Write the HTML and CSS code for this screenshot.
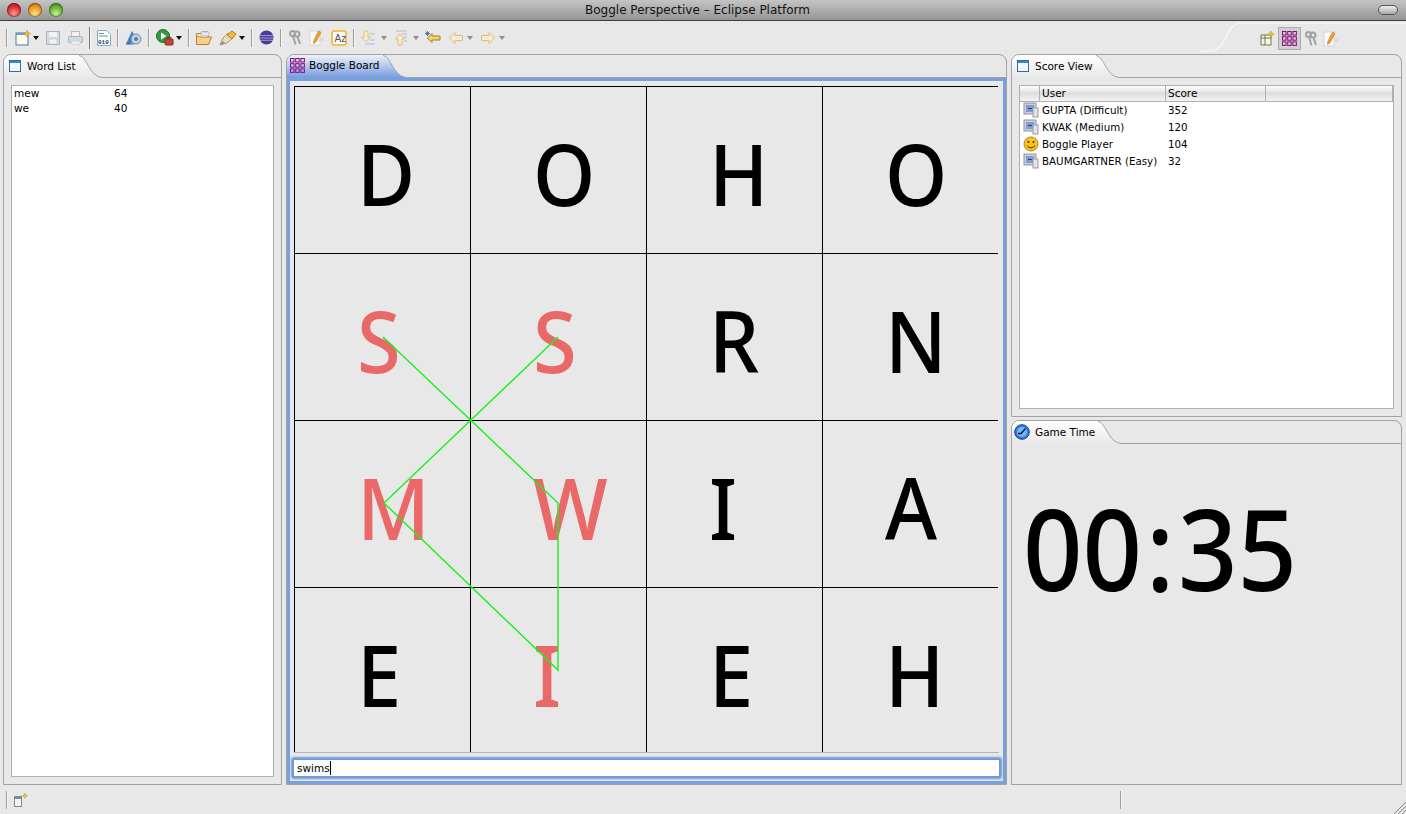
FILE: index.html
```html
<!DOCTYPE html>
<html lang="en">
<head>
    <meta charset="UTF-8">
    <title>Boggle Perspective - Eclipse Platform</title>
    <link rel="stylesheet" href="styles.css">
</head>
<body>
    <svg class="defs" width="0" height="0">
        <defs>
            <linearGradient id="tabfill" x1="0" y1="0" x2="0" y2="1"><stop offset="0" stop-color="#fff"/><stop offset="1" stop-color="#e8e8e8"/></linearGradient>
            <linearGradient id="tabblue" x1="0" y1="0" x2="0" y2="1"><stop offset="0" stop-color="#eef2fa"/><stop offset=".85" stop-color="#7a9fdf"/></linearGradient>
            <symbol id="i-view" viewBox="0 0 12 12"><rect x=".5" y=".5" width="11" height="11" fill="#f4f8fd" stroke="#2f6bb0"/><rect x="1" y="1" width="10" height="2" fill="#3f83c8"/></symbol>
            <symbol id="i-grid" viewBox="0 0 15 15"><g fill="none" stroke="#8c0a7e" stroke-width="1"><rect x=".5" y=".5" width="3.5" height="3.5"/><rect x="5.700" y=".5" width="3.500" height="3.500"/><rect x="10.900" y=".5" width="3.500" height="3.500"/><rect x=".5" y="5.700" width="3.500" height="3.500"/><rect x="5.700" y="5.700" width="3.500" height="3.500"/><rect x="10.900" y="5.700" width="3.500" height="3.500"/><rect x=".5" y="10.900" width="3.500" height="3.500"/><rect x="5.700" y="10.900" width="3.500" height="3.500"/><rect x="10.900" y="10.900" width="3.500" height="3.500"/></g></symbol>
            <symbol id="i-keys" viewBox="0 0 14 16"><g fill="none" stroke="#a2a2a2" stroke-width="2"><circle cx="4.500" cy="3.500" r="2.500"/><circle cx="9" cy="4" r="2.500"/><path d="M5 6l2.500 8.500M9.500 6.500l2.500 7.500"/></g></symbol>
            <symbol id="i-pencil" viewBox="0 0 16 16"><rect x="1" y="1" width="10" height="14" fill="#fbfbfb" stroke="#d5d5d5"/><path d="M9.500 1l2.500 1.500-5 9.500-2.500 1.500.3-3z" fill="#f0a030" stroke="#c9781a" stroke-width=".6"/><path d="M12 8h3v3h-3z" fill="#d8d8d8"/></symbol>
            <symbol id="i-pc" viewBox="0 0 16 16"><rect x="1" y="1" width="12" height="11" fill="#c8d0dc" stroke="#8d96a5"/><rect x="3" y="3" width="8" height="7" fill="#7f9ccc"/><path d="M5 6.500h4" stroke="#1e3f8a"/><rect x="10" y="6" width="5" height="9" fill="#e4e4e4" stroke="#9a9a9a"/></symbol>
            <symbol id="i-left" viewBox="0 0 16 14"><path d="M7 1.500L1.500 7 7 12.500V9.500h7.500v-5H7z" fill="#f6edd0" stroke="#d9bf7c"/></symbol>
        </defs>
    </svg>

    <header class="titlebar">
        <div class="lights">
            <span class="light light-red"></span>
            <span class="light light-amber"></span>
            <span class="light light-green"></span>
        </div>
        <div class="window-title">Boggle Perspective – Eclipse Platform</div>
        <span class="pill"></span>
    </header>

    <div class="toolbar">
        <span class="sep sep-first"></span>
        <svg class="tool" width="16" height="16" viewBox="0 0 16 16"><rect x="1" y="3" width="12" height="12" fill="#fffbe8" stroke="#4a78b0"/><rect x="1" y="3" width="12" height="2" fill="#6a9ad0"/><path d="M12 0l1 2.500 2.500 1-2.500 1-1 2.500-1-2.500-2.500-1 2.500-1z" fill="#f2c230" stroke="#b98a10" stroke-width=".5"/></svg>
        <span class="caret"></span>
        <svg class="tool gap-6" width="16" height="16" viewBox="0 0 16 16"><path d="M1.500 1.500h13v13h-13z" fill="#d4dbe4" stroke="#a9b2be"/><rect x="4" y="2" width="8" height="5" fill="#eef1f5"/><rect x="4" y="9" width="8" height="5" fill="#f1f3f6" stroke="#b2b9c2" stroke-width=".5"/></svg>
        <svg class="tool gap-6" width="16" height="16" viewBox="0 0 16 16"><rect x="4.500" y="1.500" width="8" height="5" fill="#f1f1f1" stroke="#b9bec6"/><rect x="1.500" y="6.500" width="14" height="6" rx="1" fill="#d0d9e6" stroke="#a8b2c0"/><rect x="4" y="11" width="9" height="3.500" fill="#eee" stroke="#b9bec6" stroke-width=".5"/></svg>
        <span class="sep sep-tall"></span>
        <svg class="tool" width="14" height="16" viewBox="0 0 14 16"><path d="M.5.500h9l4 4v11H.5z" fill="#fdfdfd" stroke="#8da6c6"/><rect x="2" y="3" width="5" height="1" fill="#6e8cb5"/><rect x="2" y="5.500" width="9" height="1" fill="#6e8cb5"/><text class="bin" x="1" y="13.500">010</text></svg>
        <span class="sep"></span>
        <svg class="tool" width="17" height="16" viewBox="0 0 17 16"><path d="M1 14L7 1l3 5-4 8z" fill="#3f7fc4"/><circle cx="11" cy="9" r="5" fill="#c3d3e4" stroke="#6f8aa8"/><circle cx="11" cy="9" r="2" fill="#5a7b9e"/><path d="M1 14h8" stroke="#2a66a8"/></svg>
        <span class="sep"></span>
        <svg class="tool" width="18" height="17" viewBox="0 0 18 17"><circle cx="7" cy="7" r="6.500" fill="#2f9c3e" stroke="#1e6e2a"/><path d="M5 3.500l5.500 3.500L5 10.500z" fill="#fff"/><rect x="9" y="10" width="8" height="6" rx="1" fill="#c8443a" stroke="#8a2820"/><path d="M11 10V8.500h4V10" fill="none" stroke="#8a2820"/></svg>
        <span class="caret"></span>
        <span class="sep"></span>
        <svg class="tool" width="16" height="14" viewBox="0 0 16 14"><path d="M.5 5V13.500h12L15.500 6H4z" fill="#f8d088" stroke="#b9802c"/><path d="M.5 5V2.500H5L6 1h6v5" fill="#fbe6b8" stroke="#b9802c"/><rect x="5" y="1" width="8" height="4" fill="#e2e6ee" stroke="#9aa5b5" stroke-width=".5"/></svg>
        <svg class="tool gap-7" width="18" height="16" viewBox="0 0 18 16"><path d="M1 15l3-7 5-5 5 5-6 5z" fill="#e6dcc0" stroke="#aa9a70"/><path d="M8 5l5-4 4 3-4 5z" fill="#f4b842" stroke="#b37f1c"/><path d="M1 15l3-4 2 2z" fill="#8a8a8a"/></svg>
        <span class="caret"></span>
        <span class="sep"></span>
        <svg class="tool" width="15" height="15" viewBox="0 0 15 15"><circle cx="7.500" cy="7.500" r="7" fill="#4a3a9a"/><path d="M1 5.500h13M.5 8h14M1 10.300h13" stroke="#c9c2ee" stroke-width=".7"/></svg>
        <span class="sep"></span>
        <svg class="tool" width="14" height="16"><use href="#i-keys"/></svg>
        <svg class="tool gap-7" width="16" height="16"><use href="#i-pencil"/></svg>
        <svg class="tool gap-6" width="16" height="16" viewBox="0 0 16 16"><rect x="1" y="1" width="14" height="14" rx="2" fill="#fbfbfb" stroke="#f0b428" stroke-width="1.600"/><text class="az" x="3.500" y="12">Az</text></svg>
        <span class="sep"></span>
        <svg class="tool" width="15" height="16" viewBox="0 0 15 16"><path d="M3 1h4v6h2.500L5 12 .5 7H3z" fill="#f6edd0" stroke="#d9bf7c"/><path d="M9 4h5M9 10h5M4 14h10" stroke="#a8bcd8"/></svg>
        <span class="caret caret-grey gap-5"></span>
        <svg class="tool gap-6" width="15" height="16" viewBox="0 0 15 16"><path d="M5 15h4V9h2.500L7 4 2.500 9H5z" fill="#f6edd0" stroke="#d9bf7c"/><path d="M3 1h11M9 4h5M11 7h3M11 11h3" stroke="#a8bcd8"/></svg>
        <span class="caret caret-grey gap-5"></span>
        <svg class="tool gap-6" width="16" height="14" viewBox="0 0 16 14"><path d="M7 2.500L2.500 7 7 11.500V9h8V5H7z" fill="#f6d36a" stroke="#a8801c"/><path d="M2.500 0v5M0 2.500h5M.8.800l3.400 3.400M4.200.800L.8 4.200" stroke="#2d4d9a" stroke-width=".7"/></svg>
        <svg class="tool gap-7" width="16" height="14"><use href="#i-left"/></svg>
        <span class="caret caret-grey gap-3"></span>
        <svg class="tool flip gap-7" width="16" height="14"><use href="#i-left"/></svg>
        <span class="caret caret-grey gap-3"></span>

        <svg class="swoosh" width="206" height="32" viewBox="0 0 206 32"><path d="M0 30h10C28 30 24 2 42 2h164" fill="none" stroke="#fafafa" stroke-width="1.200"/></svg>
        <div class="persp">
            <svg width="15" height="15" viewBox="0 0 15 15"><path d="M1 4h10v10H1zM1 7h10M5 4v10" fill="#f6f4e4" stroke="#6a7a52"/><path d="M11 0l1 2.200 2.200 1-2.200 1-1 2.200-1-2.200-2.200-1 2.200-1z" fill="#f2c230" stroke="#b98a10" stroke-width=".5"/></svg>
            <span class="persp-on"><svg width="15" height="15"><use href="#i-grid"/></svg></span>
            <svg width="14" height="16"><use href="#i-keys"/></svg>
            <svg class="persp-last" width="16" height="16"><use href="#i-pencil"/></svg>
        </div>
    </div>

    <main class="workspace">
        <section class="panel panel-words">
            <div class="tab-head">
                <div class="tab"><svg width="12" height="12"><use href="#i-view"/></svg><span class="tab-label">Word List</span></div>
                <svg class="tab-curve" width="26" height="23" viewBox="0 0 26 23"><path d="M0 0h3C11 1 13 21 26 22v1H0z" fill="url(#tabfill)"/><path d="M3 .5C11 1 13 21.500 26 22.500" fill="none" stroke="#a2a2a2"/></svg>
                <div class="tab-rest"></div>
            </div>
            <div class="list-box">
                <div class="word-row"><span class="word">mew</span><span>64</span></div>
                <div class="word-row"><span class="word">we</span><span>40</span></div>
            </div>
        </section>

        <section class="panel panel-board">
            <div class="tab-head tab-head-board">
                <div class="tab tab-active"><svg width="15" height="15"><use href="#i-grid"/></svg><span class="tab-label">Boggle Board</span></div>
                <svg class="tab-curve" width="26" height="26" viewBox="0 0 26 26"><path d="M0 0h3C11 1 13 21 26 22v4H0z" fill="url(#tabblue)"/><path d="M3 .5C11 1 13 21.500 26 22.500" fill="none" stroke="#a2a2a2"/></svg>
                <div class="tab-rest-active"></div>
            </div>
            <div class="board-frame">
                <div class="board">
                    <div class="cell"><span class="letter">D</span></div><div class="cell"><span class="letter">O</span></div><div class="cell"><span class="letter">H</span></div><div class="cell"><span class="letter">O</span></div>
                    <div class="cell hit"><span class="letter">S</span></div><div class="cell hit"><span class="letter">S</span></div><div class="cell"><span class="letter">R</span></div><div class="cell"><span class="letter">N</span></div>
                    <div class="cell hit"><span class="letter">M</span></div><div class="cell hit"><span class="letter">W</span></div><div class="cell"><span class="letter">I</span></div><div class="cell"><span class="letter">A</span></div>
                    <div class="cell"><span class="letter">E</span></div><div class="cell hit"><span class="letter">I</span></div><div class="cell"><span class="letter">E</span></div><div class="cell"><span class="letter">H</span></div>
                    <svg class="trace" width="704" height="666" viewBox="0 0 704 666"><polyline points="89,251 264,417 264,584 90,417 264,251" fill="none" stroke="#1cf01c" stroke-width="1.400"/></svg>
                </div>
                <div class="word-input">swims<span class="cursor"></span></div>
            </div>
        </section>

        <div class="side">
            <section class="panel panel-score">
                <div class="tab-head">
                    <div class="tab"><svg width="12" height="12"><use href="#i-view"/></svg><span class="tab-label">Score View</span></div>
                    <svg class="tab-curve" width="26" height="23" viewBox="0 0 26 23"><path d="M0 0h3C11 1 13 21 26 22v1H0z" fill="url(#tabfill)"/><path d="M3 .5C11 1 13 21.500 26 22.500" fill="none" stroke="#a2a2a2"/></svg>
                    <div class="tab-rest"></div>
                </div>
                <div class="score-box">
                    <div class="score-head">
                        <span class="col-icon"></span>
                        <span class="col-user">User</span>
                        <span class="col-score">Score</span>
                        <span class="col-rest"></span>
                    </div>
                    <div class="score-row"><svg width="16" height="16"><use href="#i-pc"/></svg><span class="row-user">GUPTA (Difficult)</span><span>352</span></div>
                    <div class="score-row"><svg width="16" height="16"><use href="#i-pc"/></svg><span class="row-user">KWAK (Medium)</span><span>120</span></div>
                    <div class="score-row"><svg width="16" height="16" viewBox="0 0 16 16"><circle cx="8" cy="8" r="7" fill="#f6c51e" stroke="#c07a10"/><circle cx="5.500" cy="6" r="1" fill="#4a2c00"/><circle cx="10.500" cy="6" r="1" fill="#4a2c00"/><path d="M4 9.500c1.500 3 6.500 3 8 0" fill="none" stroke="#4a2c00"/></svg><span class="row-user">Boggle Player</span><span>104</span></div>
                    <div class="score-row"><svg width="16" height="16"><use href="#i-pc"/></svg><span class="row-user">BAUMGARTNER (Easy)</span><span>32</span></div>
                </div>
            </section>

            <section class="panel panel-time">
                <div class="tab-head">
                    <div class="tab tab-time"><svg width="16" height="16" viewBox="0 0 16 16"><circle cx="8" cy="8" r="7.300" fill="#2f7fdc" stroke="#123f86"/><circle cx="8" cy="8" r="5" fill="#7ab4ee"/><path d="M7.500 9L11.500 4.500M4 9.500h4" stroke="#0b1f44" stroke-width="1.500"/></svg><span class="tab-label">Game Time</span></div>
                    <svg class="tab-curve" width="26" height="23" viewBox="0 0 26 23"><path d="M0 0h3C11 1 13 21 26 22v1H0z" fill="url(#tabfill)"/><path d="M3 .5C11 1 13 21.500 26 22.500" fill="none" stroke="#a2a2a2"/></svg>
                    <div class="tab-rest"></div>
                </div>
                <div class="clock">00<span class="colon">:</span>35</div>
            </section>
        </div>
    </main>

    <footer class="statusbar">
        <span class="sep status-sep"></span>
        <svg class="status-icon" width="15" height="14" viewBox="0 0 15 14"><rect x=".5" y="3.500" width="7" height="10" fill="#f4f4f4" stroke="#888"/><rect x="1" y="4" width="6" height="2" fill="#6f8fb8"/><path d="M11 0l.8 2 2 .8-2 .8-.8 2-.8-2-2-.8 2-.8z" fill="#f2c230" stroke="#b98a10" stroke-width=".4"/></svg>
        <span class="sep status-sep-2"></span>
        <svg class="grip" width="12" height="12" viewBox="0 0 12 12"><path d="M0 12L12 0M4 12l8-8M8 12l4-4" stroke="#8a8a8a"/></svg>
    </footer>
</body>
</html>
```

FILE: styles.css
```css
html, body {
    margin: 0;
    padding: 0;
}
body {
    width: 1406px;
    height: 814px;
    overflow: hidden;
    display: flex;
    flex-direction: column;
    background-color: #e8e8e8;
    font-family: "DejaVu Sans", sans-serif;
    font-size: 10.5px;
    color: #000;
}
svg {
    display: block;
    flex: none;
}
.defs {
    position: absolute;
}

/* title bar */
.titlebar {
    height: 20px;
    flex: none;
    display: flex;
    align-items: center;
    position: relative;
    background: linear-gradient(#c4c4c4, #959595);
    border-bottom: 1px solid #3f3f3f;
}
.lights {
    display: flex;
    gap: 7px;
    padding-left: 7px;
}
.light {
    width: 14px;
    height: 14px;
    border-radius: 50%;
    box-shadow: inset 0 0 0 1px rgba(0, 0, 0, 0.35);
}
.light-red {
    background: radial-gradient(circle at 50% 75%, #ff9a8e, #d5242a 60%, #8e1418);
}
.light-amber {
    background: radial-gradient(circle at 50% 75%, #ffe28a, #e98b1c 60%, #a45a10);
}
.light-green {
    background: radial-gradient(circle at 50% 75%, #c8f090, #5aa82c 60%, #2f6e18);
}
.window-title {
    position: absolute;
    left: 585px;
    top: 3px;
    font-size: 12px;
    line-height: 15px;
    white-space: nowrap;
    color: #111;
}
.pill {
    position: absolute;
    right: 8px;
    top: 5px;
    width: 18px;
    height: 8px;
    border: 1px solid #555;
    border-radius: 5px;
    background: linear-gradient(#eee, #aaa);
}

/* toolbar */
.toolbar {
    height: 33px;
    flex: none;
    display: flex;
    align-items: center;
    position: relative;
}
.sep {
    width: 1px;
    height: 18px;
    flex: none;
    background-color: #9d9d9d;
    border-right: 1px solid #f7f7f7;
    margin: 0 6px;
}
.sep-first {
    margin-right: 7px;
}
.sep-tall {
    height: 22px;
    background-color: #777;
}
.caret {
    width: 0;
    height: 0;
    flex: none;
    margin-left: 2px;
    border-left: 3px solid transparent;
    border-right: 3px solid transparent;
    border-top: 4px solid #111;
}
.caret-grey {
    border-top-color: #8c8c8c;
}
.gap-3 {
    margin-left: 3px;
}
.gap-5 {
    margin-left: 5px;
}
.gap-6 {
    margin-left: 6px;
}
.gap-7 {
    margin-left: 7px;
}
.flip {
    transform: scaleX(-1);
}
.bin {
    font-family: "Liberation Mono", monospace;
    font-size: 6px;
    font-weight: bold;
    fill: #23456e;
}
.az {
    font-family: "Liberation Sans", sans-serif;
    font-size: 10px;
    fill: #555;
}
.swoosh {
    position: absolute;
    left: 1200px;
    top: 0;
}
.persp {
    position: absolute;
    left: 1260px;
    top: 6px;
    display: flex;
    align-items: center;
}
.persp-on {
    width: 21px;
    height: 21px;
    margin: 0 3px;
    display: flex;
    align-items: center;
    justify-content: center;
    background-color: #cfcfcf;
    border: 1px solid #ababab;
}
.persp-last {
    margin-left: 5px;
}

/* panels */
.workspace {
    flex: 1;
    min-height: 0;
    display: flex;
    gap: 4px;
    padding-left: 3px;
}
.panel {
    display: flex;
    flex-direction: column;
    box-sizing: border-box;
    border: 1px solid #a2a2a2;
    border-radius: 8px 8px 0 0;
    overflow: hidden;
}
.panel-words {
    width: 279px;
}
.panel-board {
    width: 721px;
}
.side {
    width: 391px;
    display: flex;
    flex-direction: column;
    gap: 3px;
}
.panel-score {
    height: 363px;
    flex: none;
}
.panel-time {
    flex: 1;
}
.tab-head {
    height: 23px;
    flex: none;
    display: flex;
}
.tab-head-board {
    height: 26px;
}
.tab {
    box-sizing: border-box;
    display: flex;
    align-items: center;
    padding: 0 0 2px 5px;
    background: linear-gradient(#fff, #e8e8e8);
}
.tab-label {
    margin-left: 6px;
    white-space: nowrap;
}
.tab-active {
    padding: 0 0 6px 3px;
    background: linear-gradient(#eef2fa, #7a9fdf 85%);
}
.tab-active .tab-label {
    margin-left: 4px;
}
.tab-time {
    padding-left: 2px;
}
.tab-time .tab-label {
    margin-left: 5px;
}
.tab-rest {
    flex: 1;
    border-bottom: 1px solid #a2a2a2;
}
.tab-rest-active {
    flex: 1;
    background: linear-gradient(transparent 22px, #a2a2a2 22px, #a2a2a2 23px, #7a9fdf 23px);
}

/* word list */
.list-box {
    flex: 1;
    margin: 7px;
    padding: 0 2px;
    background-color: #fff;
    border: 1px solid #b0b0b0;
}
.word-row {
    display: flex;
    height: 15px;
    line-height: 15px;
}
.word {
    width: 100px;
}

/* board */
.board-frame {
    flex: 1;
    display: flex;
    flex-direction: column;
    border: 3px solid #7a9fdf;
    border-top: none;
    padding: 5px 4px;
}
.board {
    position: relative;
    display: grid;
    grid-template-columns: repeat(4, 176px);
    grid-template-rows: 167px 167px 167px 165px;
    border-bottom: 1px solid #b4b4b4;
    width: 705px;
}
.cell {
    box-sizing: border-box;
    border-left: 1px solid #000;
    border-top: 1px solid #000;
    padding: 36px 0 0 62px;
    font-family: "Noto Sans", sans-serif;
    font-size: 85.5px;
    font-weight: 500;
    line-height: 100px;
}
.letter {
    display: inline-block;
    transform: scaleX(0.93);
    transform-origin: left;
}
.hit {
    color: #e96868;
}
.trace {
    position: absolute;
    left: 0;
    top: 0;
}
.word-input {
    box-sizing: border-box;
    flex: none;
    width: 705px;
    height: 16px;
    line-height: 16px;
    margin-top: 7px;
    padding: 0 3px;
    background-color: #fff;
    border-radius: 1px;
    box-shadow: 0 0 2px 3px #6f9ad6;
}
.cursor {
    display: inline-block;
    width: 1px;
    height: 14px;
    vertical-align: -3px;
    background-color: #000;
}

/* score table */
.score-box {
    flex: 1;
    margin: 7px;
    background-color: #fff;
    border: 1px solid #b0b0b0;
}
.score-head {
    height: 15px;
    display: flex;
    line-height: 15px;
    margin-bottom: -1px;
    background: linear-gradient(#fff, #dedede 50%, #f4f4f4);
    border-bottom: 1px solid #b0b0b0;
}
.score-head span {
    box-sizing: border-box;
    padding-left: 2px;
    border-right: 1px solid #b0b0b0;
}
.col-icon {
    width: 20px;
}
.col-user {
    width: 126px;
}
.col-score {
    width: 100px;
}
.col-rest {
    flex: 1;
}
.score-row {
    height: 17px;
    display: flex;
    align-items: center;
    padding-left: 3px;
    font-size: 10.3px;
}
.row-user {
    width: 126px;
    margin-left: 3px;
    white-space: nowrap;
}

/* clock */
.clock {
    margin: 39px 0 0 11px;
    font-family: "Noto Sans", sans-serif;
    font-size: 112px;
    font-weight: 500;
    line-height: 130px;
    white-space: nowrap;
    transform: scaleX(0.93);
    transform-origin: left;
}
.colon {
    margin: 0 4px;
}

/* status bar */
.statusbar {
    height: 29px;
    flex: none;
    display: flex;
    align-items: center;
    position: relative;
}
.status-sep {
    margin: 0 6px;
}
.status-sep-2 {
    margin: 0 0 0 1091px;
}
.grip {
    position: absolute;
    right: 0;
    bottom: 0;
}
```
